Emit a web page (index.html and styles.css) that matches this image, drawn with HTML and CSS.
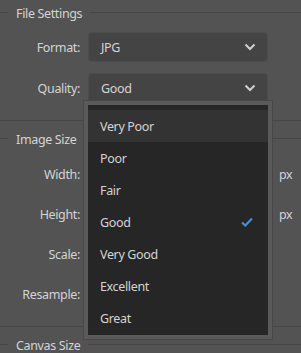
FILE: index.html
```html
<!DOCTYPE html>
<html lang="en">
<head>
    <meta charset="UTF-8">
    <meta name="viewport" content="width=device-width, initial-scale=1.0">
    <title>Export Settings</title>
    <link rel="stylesheet" href="styles.css">
</head>
<body>
    <div class="panel">
        <!-- File Settings -->
        <div class="group">
            <div class="group-title"><span>File Settings</span></div>
            <div class="rows rows-file">
                <label class="row-label">Format:</label>
                <div class="select">
                    <span>JPG</span>
                    <svg class="chevron" width="12" height="8" viewBox="0 0 12 8"><path d="M1.5 1.5 L6 6 L10.5 1.5" fill="none" stroke="#d0d0d0" stroke-width="2"/></svg>
                </div>
                <span></span>

                <label class="row-label">Quality:</label>
                <div class="select">
                    <span>Good</span>
                    <svg class="chevron" width="12" height="8" viewBox="0 0 12 8"><path d="M1.5 1.5 L6 6 L10.5 1.5" fill="none" stroke="#d0d0d0" stroke-width="2"/></svg>
                </div>
                <span></span>
            </div>
        </div>

        <!-- Image Size -->
        <div class="group">
            <div class="group-title"><span>Image Size</span></div>
            <div class="rows rows-size">
                <label class="row-label">Width:</label>
                <div class="field"></div>
                <span class="unit">px</span>

                <label class="row-label">Height:</label>
                <div class="field"></div>
                <span class="unit">px</span>

                <label class="row-label">Scale:</label>
                <div class="field"></div>
                <span></span>

                <label class="row-label">Resample:</label>
                <div class="field"></div>
                <span></span>
            </div>
        </div>

        <!-- Canvas Size -->
        <div class="group">
            <div class="group-title"><span>Canvas Size</span></div>
        </div>

        <!-- Quality dropdown (open) -->
        <ul class="dropdown">
            <li class="hover">Very Poor</li>
            <li>Poor</li>
            <li>Fair</li>
            <li class="selected">Good
                <svg class="check" width="12" height="10" viewBox="0 0 12 10"><path d="M1 5.5 L4.3 8.5 L11 1.5" fill="none" stroke="#3f8fe0" stroke-width="2.2"/></svg>
            </li>
            <li>Very Good</li>
            <li>Excellent</li>
            <li>Great</li>
        </ul>
    </div>
</body>
</html>
```

FILE: styles.css
```css
body {
    margin: 0;
    padding: 0;
    background-color: #535353;
    font-family: "Noto Sans", "Open Sans", sans-serif;
    font-size: 12.5px;
    letter-spacing: -0.35px;
    color: #d4d4d4;
}

.panel {
    position: relative;
    width: 301px;
    height: 353px;
    overflow: hidden;
}

.group {
    border-bottom: 1px solid #464646;
    padding-bottom: 17px;
    margin-bottom: 5px;
}

.group-title {
    display: flex;
    align-items: center;
    gap: 8px;
    height: 24px;
}

.group-title::before {
    content: "";
    width: 8px;
    height: 1px;
    background-color: #464646;
}

.group-title::after {
    content: "";
    flex: 1;
    height: 1px;
    background-color: #464646;
}

.group-title span {
    padding-top: 2px;
}

.rows {
    display: grid;
    grid-template-columns: 80px 180px auto;
    column-gap: 8px;
    align-items: center;
}

.rows-file {
    padding-top: 8px;
    row-gap: 11px;
}

.rows-size {
    padding-top: 9px;
    row-gap: 10px;
}

.row-label {
    text-align: right;
}

.select,
.field {
    height: 30px;
    box-sizing: border-box;
    background-color: #444444;
    border: 1px solid #4c4c4c;
    border-radius: 4px;
    display: flex;
    align-items: center;
    justify-content: space-between;
    padding: 0 11px 0 12px;
}

.unit {
    padding-left: 3px;
}

.dropdown {
    position: absolute;
    left: 84px;
    top: 101px;
    width: 188px;
    height: 238px;
    box-sizing: border-box;
    margin: 0;
    padding: 5px 0 0 0;
    list-style: none;
    background-color: #262626;
    border: 4px solid #5a5a5a;
    box-shadow: 0 0 0 1px #474747;
}

.dropdown li {
    height: 32px;
    display: flex;
    align-items: center;
    justify-content: space-between;
    padding: 0 15px 0 12px;
}

.dropdown li.hover {
    background-color: #333333;
}
```
